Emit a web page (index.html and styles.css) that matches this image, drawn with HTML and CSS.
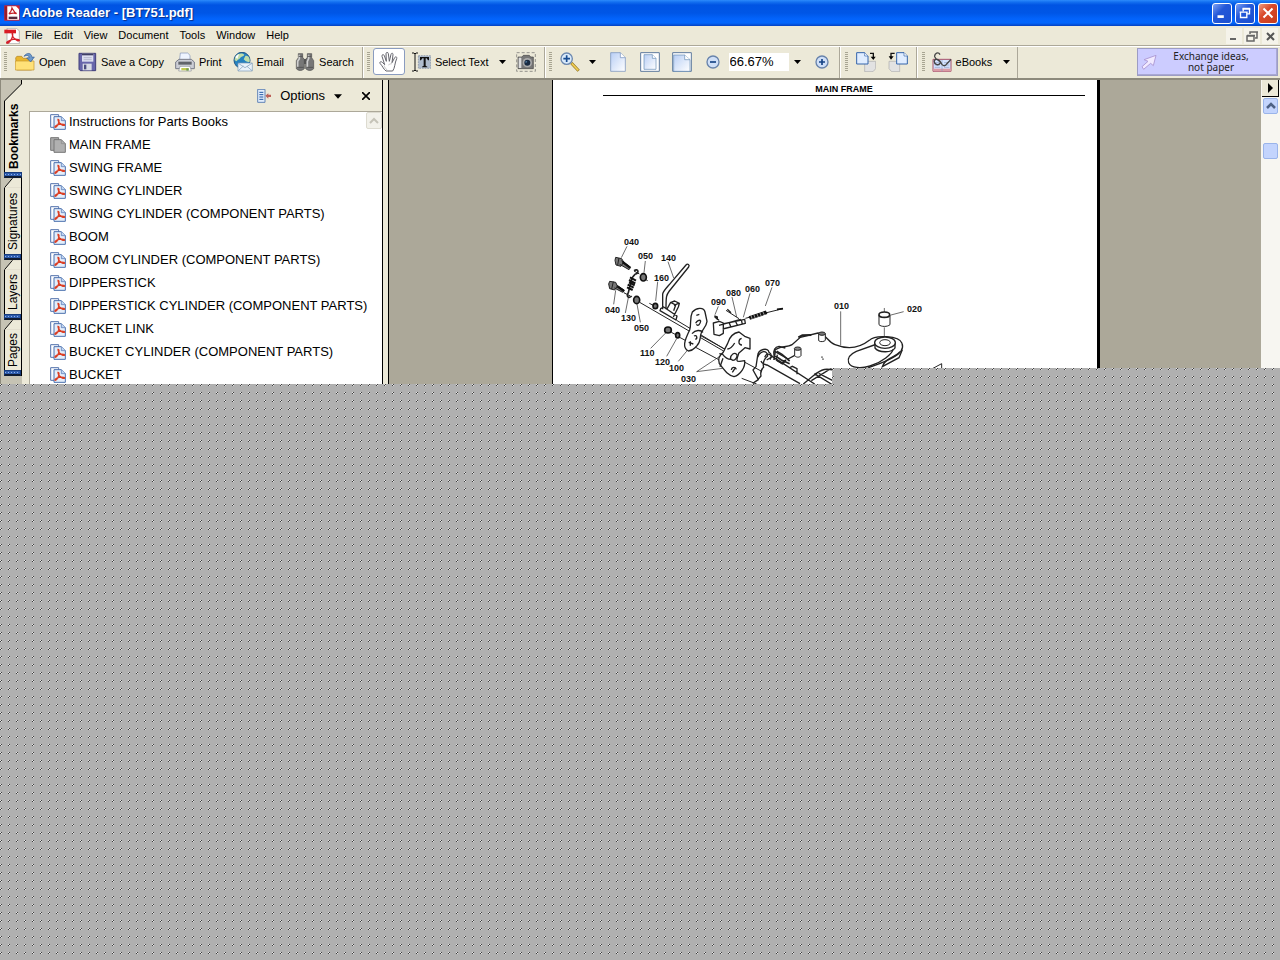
FILE: index.html
```html
<!DOCTYPE html>
<html lang="en">
<head>
<meta charset="utf-8">
<title>Adobe Reader - [BT751.pdf]</title>
<link rel="stylesheet" href="styles.css">
</head>
<body>
<svg class="defs" aria-hidden="true">
  <defs>
    <linearGradient id="paper" x1="0" y1="0" x2="1" y2="1"><stop offset="0" stop-color="#b9cff5"/><stop offset="1" stop-color="#fff"/></linearGradient>
    <pattern id="dots" width="8" height="8" patternUnits="userSpaceOnUse">
      <rect width="8" height="8" fill="#b0b0b0"/>
      <path d="M1 0h1v1h-1zM0 1h1v1h-1z" fill="#404040"/>
      <path d="M0 0h1v1h-1zM1 1h1v1h-1z" fill="#e4e4e4"/>
    </pattern>
    <symbol id="pdf" viewBox="0 0 48 48">
      <path d="M2 2h24v8M2 2v38h10" fill="#f3f7ff" stroke="#5573ad" stroke-width="3"/>
      <path d="M12 8h22l12 12v26H12z" fill="#e4eefb" stroke="#4b70ae" stroke-width="3"/>
      <path d="M34 8v12h12" fill="#c1d5f2" stroke="#4b70ae" stroke-width="2"/>
      <path d="M24 16c6 0 2 14-3 20-4 5-8 5-5 1 5-5 17-8 25-6 6 2 1 5-5 2-7-4-12-11-12-17z" fill="none" stroke="#db3f25" stroke-width="4"/>
    </symbol>
    <symbol id="pages" viewBox="0 0 48 48">
      <path d="M2 2h24v38H2z" fill="#a9a9a9" stroke="#777" stroke-width="3"/>
      <path d="M12 8h22l12 12v26H12z" fill="#b0b0b0" stroke="#777" stroke-width="3"/>
      <path d="M34 8v12h12" fill="none" stroke="#888" stroke-width="2"/>
    </symbol>
    <symbol id="down" viewBox="0 0 7 4"><path d="M0 0h7L3.5 4z"/></symbol>
  </defs>
</svg>

<div class="app">
  <header class="title">
    <svg class="ic16" viewBox="0 0 48 48"><path d="M1 1h46v46H1z" fill="#d7212a"/><path d="M10 4h26l9 9v31H10z" fill="#fff"/><path d="M2 4h7v40H2z" fill="#991c28"/><path d="M15 27c5-5 8-12 9-18 4 7 7 14 14 17-8-3-15-2-23 1z" fill="none" stroke="#c52027" stroke-width="4"/><path d="M14 35h26v7H14z" fill="#53283c"/></svg>
    <h1>Adobe Reader - [BT751.pdf]</h1>
    <div class="winbtns">
      <button aria-label="Minimize"><svg viewBox="0 0 20 20"><path d="M5 14h7" stroke="#fff" stroke-width="3"/></svg></button>
      <button aria-label="Restore"><svg viewBox="0 0 20 20"><path d="M8 8V5h7v6h-3M7 5.500h9M5 9h7v6H5zM4 9h9" fill="none" stroke="#fff" stroke-width="1.500"/></svg></button>
      <button class="close" aria-label="Close"><svg viewBox="0 0 20 20"><path d="M5 5l10 10M15 5L5 15" stroke="#fff" stroke-width="2.200"/></svg></button>
    </div>
  </header>

  <nav class="menu">
    <svg class="ic16" viewBox="0 0 48 48"><path d="M9 1h29l8 8v38H9z" fill="#fff" stroke="#999" stroke-width="2"/><path d="M1 5h35v11H1z" fill="#d91c24"/><path d="M25 15c4 8-4 24-11 29-6 4-9 0-2-4 9-5 23-8 32-5 5 2 0 5-5 2-8-4-16-13-14-22z" fill="none" stroke="#d4202a" stroke-width="4"/></svg>
    <button>File</button><button>Edit</button><button>View</button><button>Document</button><button>Tools</button><button>Window</button><button>Help</button>
    <div class="docbtns">
      <button aria-label="Minimize document"><svg viewBox="0 0 16 16"><path d="M4 11h6" stroke="#666" stroke-width="2"/></svg></button>
      <button aria-label="Restore document"><svg viewBox="0 0 16 16"><path d="M6 6V4h7v6h-2M6 4h8M3 8h7v5H3zM3 7.500h8" fill="none" stroke="#666" stroke-width="1.500"/></svg></button>
      <button aria-label="Close document"><svg viewBox="0 0 16 16"><path d="M5 5l7 7M12 5l-7 7" stroke="#555" stroke-width="2"/></svg></button>
    </div>
  </nav>

  <div class="toolbar">
    <div class="group files"><i class="grip"></i>
      <button><svg class="ic20" viewBox="0 0 60 60"><path d="M2 17l4-4h14l5 6h25v35H5z" fill="#e9b62d" stroke="#ad8122" stroke-width="2"/><path d="M1 54V27h56v27z" fill="#ffe178" stroke="#c59428" stroke-width="2"/><path d="M27 13C35 0 50 2 51 16l7-1-11 15-12-12 8-1c-2-7-7-9-16-4z" fill="#6d99cb" stroke="#315c97" stroke-width="2"/></svg>Open</button>
      <button><svg class="ic20" viewBox="0 0 60 60"><path d="M6 4h50v52H10l-4-4z" fill="#6866ab" stroke="#403e7a" stroke-width="3"/><path d="M15 4h34v25H15z" fill="#dddff0"/><path d="M15 4h34v6H15z" fill="#403f65"/><path d="M17 35h27v20H17z" fill="#d9dbe5"/><path d="M21 38h7v14h-7z" fill="#4c4e80"/><path d="M20 17h24M20 23h24" stroke="#a1a3bd" stroke-width="2"/></svg>Save a Copy</button>
      <button><svg class="ic20" viewBox="0 0 60 60"><path d="M16 3h22l7 7v20H13z" fill="#eef4ff" stroke="#7f91b5" stroke-width="2"/><path d="M2 30l10-8h37l9 8v20H2z" fill="#ccced6" stroke="#777b88" stroke-width="3"/><path d="M10 29h40v9H10z" fill="#60636b"/><path d="M15 43h30l4 14H11z" fill="#fff" stroke="#8b8e95" stroke-width="2"/><path d="M19 48h22v7H19z" fill="#c3cc54"/><path d="M34 49h7v7h-7z" fill="#70995a"/></svg>Print</button>
      <button><svg class="ic20" viewBox="0 0 60 60"><circle cx="27" cy="25" r="24" fill="#2581bf" stroke="#225785" stroke-width="3"/><path d="M9 12C19 1 29 4 34 8c-2 6-11 5-13 11-3 4-6 3-10 9L5 25c0-6 2-9 4-13zM37 12c8-3 15 7 13 17-9 3-14-3-18-7z" fill="#bfdda9"/><path d="M7 16c3-5 7-8 11-9l-5 14z" fill="#fff"/><path d="M15 33h43v24H15z" fill="#e9f2fb" stroke="#7897b5" stroke-width="2"/><path d="M16 34l20 13 21-13M16 56l15-14M57 56L42 43" fill="none" stroke="#7897b5" stroke-width="2"/></svg>Email</button>
      <button><svg class="ic20" viewBox="0 0 60 60"><path d="M10 5h13v11l5 6v28c-7 7-18 7-24 0V26l6-9zM37 5h13v12l6 9v24c-6 7-17 7-24 0V22l5-6z" fill="#777" stroke="#4b4b4b" stroke-width="2"/><path d="M27 21h7v15h-7z" fill="#555"/><path d="M13 8v12L8 28v19M41 8v12l-4 8v19" fill="none" stroke="#d0d0d0" stroke-width="5"/><path d="M11 13h12M37 13h12M6 46h20M34 46h20" stroke="#555" stroke-width="3"/></svg>Search</button>
    </div>
    <div class="group basic"><i class="grip"></i>
      <button class="hand" aria-label="Hand tool"><svg class="ic20" viewBox="0 0 60 60"><path d="M21 57C13 51 10 41 3 34c-2-5 4-7 8-2l6 6-8-25c-1-6 5-7 7-2l6 17-1-23c0-5 7-5 7 0l3 23 5-21c1-5 7-4 6 1l-3 24 8-15c3-5 8-2 6 3-6 13-5 28-12 37z" fill="#fff" stroke="#64646c" stroke-width="3"/><path d="M24 54c-4-5-8-9-9-14M39 35c-4 0-9 2-11 4" stroke="#aaa" stroke-width="2" fill="none"/></svg></button>
      <button class="seltext"><svg class="ic20" viewBox="0 0 60 60"><path d="M3 3h6l3 3 3-3h6M3 57h6l3-3 3 3h6M12 5v50" fill="none" stroke="#111" stroke-width="3"/><path d="M22 11h37v38H22z" fill="#afbccd" stroke="#7c899d" stroke-width="2" stroke-dasharray="5 3"/><path d="M27 15h27v10h-3l-4-6h-3v22l5 3v2H33v-2l5-3V19h-4l-4 6h-3z" fill="#111"/></svg>Select Text</button>
      <button class="arrow" aria-label="Selection options"><svg><use href="#down"/></svg></button>
      <button aria-label="Snapshot tool"><svg class="ic20" viewBox="0 0 60 60"><path d="M2 2h56v56H2z" fill="none" stroke="#666" stroke-width="2" stroke-dasharray="9 6"/><path d="M6 15h12l4-5h18l4 5h8v35H6z" fill="#777" stroke="#444" stroke-width="2"/><path d="M8 17h8v31H8z" fill="#ddd"/><circle cx="34" cy="32" r="14" fill="#aaa"/><circle cx="34" cy="32" r="9" fill="#192b42"/><path d="M29 27l5 2-5 4z" fill="#69a1ce"/></svg></button>
    </div>
    <div class="group zoom"><i class="grip"></i>
      <button aria-label="Zoom in tool"><svg class="ic20" viewBox="0 0 60 60"><path d="M34 33l22 23" stroke="#8b701e" stroke-width="9"/><path d="M35 34l20 21" stroke="#f2cf54" stroke-width="5"/><circle cx="20" cy="20" r="17" fill="#d9eafa" stroke="#6b87ae" stroke-width="4"/><path d="M20 10v20M10 20h20" stroke="#164b91" stroke-width="5"/></svg></button>
      <button class="arrow" aria-label="Zoom tools"><svg><use href="#down"/></svg></button>
      <button aria-label="Actual size"><svg class="ic20" viewBox="0 0 60 60"><path d="M8 2h29l15 15v41H8z" fill="url(#paper)" stroke="#6b89b9" stroke-width="2"/><path d="M37 2v15h15" fill="#fff" stroke="#6b89b9" stroke-width="2"/></svg></button>
      <button aria-label="Fit page"><svg class="ic20" viewBox="0 0 60 60"><path d="M2 2h56v56H2z" fill="#fff" stroke="#5e7a9d" stroke-width="3"/><path d="M12 8h25l11 11v33H12z" fill="url(#paper)" stroke="#648bb4" stroke-width="2"/><path d="M37 8v11h11" fill="#fff" stroke="#648bb4" stroke-width="2"/></svg></button>
      <button aria-label="Fit width"><svg class="ic20" viewBox="0 0 60 60"><path d="M2 2h56v56H2z" fill="#fff" stroke="#5e7a9d" stroke-width="3"/><path d="M5 9h33l16 14v35H5z" fill="url(#paper)" stroke="#648bb4" stroke-width="2"/><path d="M38 9v14h16" fill="#fff" stroke="#648bb4" stroke-width="2"/></svg></button>
      <button class="minus" aria-label="Zoom out"><svg class="ic14" viewBox="0 0 42 42"><circle cx="21" cy="21" r="18" fill="#cfdff7" stroke="#6883ab" stroke-width="4"/><path d="M12 21h18" stroke="#164486" stroke-width="5"/></svg></button>
      <div class="zoombox"><input type="text" value="66.67%" aria-label="Zoom level"><button class="arrow" aria-label="Zoom levels"><svg><use href="#down"/></svg></button></div>
      <button aria-label="Zoom in"><svg class="ic14" viewBox="0 0 42 42"><circle cx="21" cy="21" r="18" fill="#cfdff7" stroke="#6883ab" stroke-width="4"/><path d="M12 21h18M21 12v18" stroke="#164486" stroke-width="5"/></svg></button>
    </div>
    <div class="group rotate"><i class="grip"></i>
      <button aria-label="Rotate clockwise"><svg class="ic20" viewBox="0 0 60 60"><path d="M26 28h33v22l-8 9H26z" fill="#e2e2e2" stroke="#aaa" stroke-width="2"/><path d="M2 2h24l10 10v24H2z" fill="#e0edff" stroke="#3464aa" stroke-width="3"/><path d="M26 2v10h10" fill="#fff" stroke="#3464aa" stroke-width="2"/><path d="M42 4h10v12" fill="none" stroke="#111" stroke-width="4"/><path d="M44 14h15l-7 10z"/></svg></button>
      <button aria-label="Rotate counterclockwise"><svg class="ic20" viewBox="0 0 60 60"><path d="M3 28h32v31H11l-8-9z" fill="#e2e2e2" stroke="#aaa" stroke-width="2"/><path d="M26 2h22l10 10v24H26z" fill="#e0edff" stroke="#3464aa" stroke-width="3"/><path d="M48 2v10h10" fill="#fff" stroke="#3464aa" stroke-width="2"/><path d="M20 4H9v12" fill="none" stroke="#111" stroke-width="4"/><path d="M2 13h15l-8 10z"/></svg></button>
    </div>
    <div class="group books"><i class="grip"></i>
      <button><svg class="ic20" viewBox="0 0 60 60"><path d="M3 22h54v36H3z" fill="#d5e4ff" stroke="#a65069" stroke-width="3"/><path d="M4 58h53v-8H4z" fill="#dc9ca5"/><path d="M30 24v34M8 32h17M8 39h17M8 46h17M36 32h16M36 39h16M36 46h16" stroke="#8c9dc3" stroke-width="2"/><path d="M24 8C19-2 7 4 8 14c3 12 22 12 16 20-5 9-19 2-17-8 5-9 17-2 20 6 3 11 13 12 17 4l13-14" fill="none" stroke="#454545" stroke-width="4"/></svg>eBooks</button>
      <button class="arrow" aria-label="eBooks menu"><svg><use href="#down"/></svg></button>
    </div>
    <a class="banner" href="#"><svg class="ic16" viewBox="0 0 48 48"><path d="M45 4L37 35 29 28 8 46 3 38 21 22 9 17z" fill="#f1eaff" stroke="#b09dd7" stroke-width="3"/></svg><span>Exchange ideas,<br>not paper</span></a>
  </div>

  <main class="work">
    <div class="tabs">
      <button class="tab on"><svg viewBox="0 0 18 21"><path d="M18 0v4L1 21h17z" fill="#ece9d8"/><path d="M17.500 0v4L.5 21" fill="none" stroke="#000"/></svg><span>Bookmarks</span><i></i></button>
      <button class="tab sig"><svg viewBox="0 0 18 10"><path d="M9 0L0 10h18V0z" fill="#ece9d8"/><path d="M9 0L.5 10" stroke="#000"/></svg><span>Signatures</span><i></i></button>
      <button class="tab lay"><svg viewBox="0 0 18 10"><path d="M9 0L0 10h18V0z" fill="#ece9d8"/><path d="M9 0L.5 10" stroke="#000"/></svg><span>Layers</span><i></i></button>
      <button class="tab pag"><svg viewBox="0 0 18 10"><path d="M9 0L0 10h18V0z" fill="#ece9d8"/><path d="M9 0L.5 10" stroke="#000"/></svg><span>Pages</span><i></i></button>
    </div>
    <aside class="panel">
      <div class="panelhead">
        <button><svg class="ic14" viewBox="0 0 42 42"><path d="M2 1h22v39H2z" fill="#e1edfc" stroke="#6385b6" stroke-width="3"/><path d="M7 10h12M7 17h12M7 24h12M7 31h12" stroke="#2459a4" stroke-width="3"/><path d="M25 20l9-7v4h8v7h-8v5z" fill="#bd6058"/></svg>Options<svg class="tri"><use href="#down"/></svg></button>
        <button aria-label="Close panel"><svg class="x" viewBox="0 0 8 8"><path d="M0 0l8 8M8 0L0 8" stroke="#000" stroke-width="1.600"/></svg></button>
      </div>
      <div class="listwrap">
        <ul>
          <li><a href="#"><svg><use href="#pdf"/></svg>Instructions for Parts Books</a></li>
          <li><a href="#"><svg><use href="#pages"/></svg>MAIN FRAME</a></li>
          <li><a href="#"><svg><use href="#pdf"/></svg>SWING FRAME</a></li>
          <li><a href="#"><svg><use href="#pdf"/></svg>SWING CYLINDER</a></li>
          <li><a href="#"><svg><use href="#pdf"/></svg>SWING CYLINDER (COMPONENT PARTS)</a></li>
          <li><a href="#"><svg><use href="#pdf"/></svg>BOOM</a></li>
          <li><a href="#"><svg><use href="#pdf"/></svg>BOOM CYLINDER (COMPONENT PARTS)</a></li>
          <li><a href="#"><svg><use href="#pdf"/></svg>DIPPERSTICK</a></li>
          <li><a href="#"><svg><use href="#pdf"/></svg>DIPPERSTICK CYLINDER (COMPONENT PARTS)</a></li>
          <li><a href="#"><svg><use href="#pdf"/></svg>BUCKET LINK</a></li>
          <li><a href="#"><svg><use href="#pdf"/></svg>BUCKET CYLINDER (COMPONENT PARTS)</a></li>
          <li><a href="#"><svg><use href="#pdf"/></svg>BUCKET</a></li>
        </ul>
        <div class="vbar off"><button aria-label="Scroll up"><svg viewBox="0 0 14 14"><path d="M3 9l4-4 4 4" fill="none" stroke="#c5c3b8" stroke-width="2"/></svg></button></div>
      </div>
    </aside>
    <div class="split"></div>
    <section class="doc">
      <article class="sheet">
        <h2>MAIN FRAME</h2>
        <svg class="drawing" viewBox="553 96 544 288" role="img" aria-label="Main frame exploded view">
          <g transform="translate(590 225) scale(.33333)" fill="none" stroke="#222" stroke-width="3" stroke-linejoin="round">
            <path d="M111 64L94 98M166 108l-4 35M234 110l17 49M203 170l-6 58M77 196l-6 42M106 264l9-46M151 292l-10-55M526 243l20-56M480 205l-20 72M426 216l14 60M385 244l-10 25M182 370l45-46M230 394l30-53M265 409l32-39M320 440l83-55M320 440l78-10" stroke-width="2"/>
            <path d="M91 111l28 18M132 138l16 9M163 161l10 6M75 186l28 15M101 203l20 10M149 232l250 145M178 235l20 10M244 322l25 13M267 336l28 15M300 358l90 48M260 286l150 90M332 332l77 43M455 460l45 17M465 412l50 27M408 256l39 25M466 280l23-6M526 264l53-13" stroke-width="3"/>
            <path d="M77 97l18 4 6 10-8 13-15-4-3-14zM87 99l-4 21M94 107l28 20-5 7-28-16M59 169l18 3 5 11-8 12-15-4-3-14zM70 170l-5 22M81 181l22 15-5 6-25-13" fill="#777" stroke-width="3"/>
            <path d="M98 111l22 17M82 184l20 14" stroke="#111" stroke-width="7"/>
            <path d="M132 137c14-9 16 10 4 10-9 9-11 12-12 19l-9 37c-7 11 1 19 10 10" stroke-width="5"/>
            <path d="M120 157l18 10M117 165l19 10M117 172l17 9M113 179l18 9M111 187l17 8" stroke="#111" stroke-width="6"/>
            <g fill="#777" stroke="#111" stroke-width="5"><ellipse cx="160" cy="157" rx="9" ry="11"/><ellipse cx="140" cy="225" rx="9" ry="11"/><ellipse cx="196" cy="243" rx="7" ry="8"/><ellipse cx="234" cy="315" rx="10" ry="9"/><ellipse cx="263" cy="331" rx="6" ry="8"/></g>
            <path d="M218 253V208c0-9 15-23 25-35l45-53c5-6 12 0 8 6l-58 72c-9 12-10 15-10 55M212 251l9-5 40 27-3 12-48-28zM231 252l11-20 15 8-6 17M243 232l11-4 14 7-3 11-15 30M252 241l13-6" stroke-width="4"/>
            <path d="M299 315c6-21-1-35 8-54 12-13 34-16 38 0l6 28c-2 18-15 24-18 37-4 14 0 25-13 37-8 7-10 14-25 15-18-9-13-29 4-63z" fill="#fff" stroke-width="4"/>
            <path d="M306 326c11-12 26-12 33-4M317 295c3-7 12-12 15-7-1 9-8 17-13 10M319 271l9-3M312 333c8-5 12 7 4 10M296 352l14 5M301 349v13" stroke-width="4"/>
            <path d="M370 294l18-5 12 5v31l-12 7-16-4zM387 301l65-18M398 312l68-17-2-12-66 14M417 292l6 15M436 287l6 14M454 284l3 14M373 273l9 3v9M374 276l13 10M412 253l11 10" fill="none" stroke-width="4"/>
            <path d="M477 277l52-17M479 281l52-17" stroke="#111" stroke-width="7"/><path d="M482 269l5 14M491 268l5 12M500 265l5 11M509 262l5 12M518 259l5 11" stroke="#ddd" stroke-width="2"/>
            <path d="M561 253l18-2" stroke="#111" stroke-width="5"/>
            <path d="M399 383l14-28c5-18 17-31 34-34l17 13 16 6v32l-15-4-19 17c-4 16-11 25 3 24l15-2c3 19-13 42-32 48-20-6-27-17-44-39-4-12-2-24 11-33z" fill="#fff" stroke-width="4"/>
            <path d="M388 386l10 2c8 11 16 17 29 15M412 372c7 0 15-6 22-18M455 340c-10 2-12 20 1 20M421 402c1-15 12-21 20-13 1 7-4 17-12 17zM424 435c2-11 13-9 15-2M435 430l-8 12M390 425l9-25" stroke-width="4"/>
            <path d="M488 475l17-11-16-29 9-10 5-33c1-19 32-27 34-10 8 4 9 12 3 22M503 397c9-22 29-22 30-4-8 7-16 20-12 34-9 7-10 16-8 26l-12 14" stroke-width="4"/>
            <path d="M552 392c-3-18 3-26 15-28l19 5M554 379l40 23 19-10 16-15M562 389l-3 16 18 12 10-10M530 405l20-12" stroke-width="4"/>
          </g>
          <g transform="translate(740 280) scale(.33333)" fill="none" stroke="#222" stroke-width="3">
            <path d="M302 94v102M491 95l-38 10M433 84v15M433 142v43" stroke-width="2"/>
            <path d="M103 213c11-17 37-9 53-19l25-22 53-13c25 3 29 27 51 35 48 19 84 2 103-13 16-17 90-15 98 9 7 18-5 31-28 43-22 13-45 20-74 31" stroke-width="4"/>
            <path d="M411 192l-62 22c-20 9-27 22-23 34 8 17 37 18 64 10 34-10 69-38 69-50M480 215c-11 17-45 17-53 45l50-27 10-24" stroke-width="4"/>
            <path d="M405 187v17c10 14 50 16 60 0v-17" stroke-width="4"/><ellipse cx="435" cy="188" rx="31" ry="17" fill="#fff" stroke-width="4"/><ellipse cx="435" cy="188" rx="16" ry="9"/>
            <path d="M417 105v29c6 7 26 7 33 0v-29"/><ellipse cx="433" cy="104" rx="16" ry="8" fill="#fff" stroke-width="5"/>
            <path d="M236 161v21c5 5 17 3 20-1v-20M164 207v20c6 7 16 5 19 0v-20" fill="#fff"/><ellipse cx="246" cy="161" rx="10" ry="5" fill="#777"/><ellipse cx="173" cy="206" rx="10" ry="5" fill="#888"/>
            <path d="M175 172l12-6 27-1" stroke-width="6"/>
            <path d="M110 214l16 9 23 20M104 226l20 14 25 11M110 241l15 8 13-9M106 212l-4 28" stroke-width="5"/>
            <path d="M74 232c5-12 12-12 19-5l131 85M63 243c3 10 10 10 18 12l99 56M190 312l29-24c35-29 44-20 80-15M214 302l57-35 29 4M223 281l54 33M236 280l41 21M147 264l10-5 14 7v17" stroke-width="4"/>
            <path d="M246 229v5M249 235v5M579 265l26-14v18"/>
            <path d="M281 286l20-22h30v24z" fill="#b0b0b0" stroke="none"/>
          </g>
          <g class="labels"><text x="624" y="245">040</text><text x="638" y="259">050</text><text x="661" y="261">140</text><text x="654" y="281">160</text><text x="605" y="313">040</text><text x="621" y="321">130</text><text x="634" y="331">050</text><text x="640" y="356">110</text><text x="655" y="365">120</text><text x="669" y="371">100</text><text x="681" y="382">030</text><text x="711" y="305">090</text><text x="726" y="296">080</text><text x="745" y="292">060</text><text x="765" y="286">070</text><text x="834" y="309">010</text><text x="907" y="312">020</text></g>
        </svg>
      </article>
    </section>
    <div class="vbar main"><button class="play" aria-label="Navigation menu"><svg viewBox="0 0 14 14"><path d="M5 2v10l5-5z"/></svg></button><button class="blue" aria-label="Scroll up"><svg viewBox="0 0 14 14"><path d="M3 9l4-4 4 4" fill="none" stroke="#4d6185" stroke-width="2.500"/></svg></button><div class="thumb blue"></div></div>
  </main>
  <svg class="step"><rect width="100%" height="100%" fill="url(#dots)"/></svg>
</div>
<svg class="rest"><rect width="100%" height="100%" fill="url(#dots)"/></svg>
</body>
</html>
```
FILE: styles.css
```css
* { box-sizing: border-box; }
body { margin: 0; height: 100vh; display: flex; flex-direction: column; overflow: hidden; font: 11px/14px "Liberation Sans", Arial, sans-serif; color: #000; }
button { border: 0; padding: 0; background: none; font: inherit; color: inherit; display: flex; align-items: center; }
svg { display: block; flex: none; }
a { color: inherit; text-decoration: none; }
.defs { position: absolute; width: 0; height: 0; }
.app { position: relative; height: 40vh; display: flex; flex-direction: column; overflow: hidden; background: #ece9d8; }
.rest { flex: 1; width: 100%; min-height: 0; shape-rendering: crispEdges; }
.step { position: absolute; left: 65%; right: 0; bottom: 0; width: 35%; height: 16px; shape-rendering: crispEdges; }
.ic20 { width: 20px; height: 20px; }
.ic16 { width: 16px; height: 16px; }
.ic14 { width: 14px; height: 14px; }

.title { flex: none; height: 26px; display: flex; align-items: center; gap: 2px; padding: 0 2px 0 4px; background: linear-gradient(#2d8bfb 0, #1470f0 2px, #0054e3 5px, #0056e6 13px, #0364fc 19px, #0266fc 23px, #0440c0 26px); }
.title h1 { flex: 1; margin: 0; font-size: 13px; line-height: 16px; color: #fff; text-shadow: 1px 1px 1px #0a2d86; }
.winbtns { display: flex; gap: 3px; }
.winbtns button { width: 20px; height: 21px; border: 1px solid #fff; border-radius: 3px; background: linear-gradient(135deg, #7fa2f4, #2458d8 40%, #1b4fd0); }
.winbtns .close { background: linear-gradient(135deg, #f09b80, #d9492a 40%, #c63c1c); }

.menu { flex: none; height: 20px; display: flex; align-items: center; padding: 0 2px 0 4px; gap: 11px; border-bottom: 1px solid #aca899; }
.menu > .ic16 { margin-right: -6px; }
.menu > button { height: 18px; padding-bottom: 2px; }
.docbtns { margin-left: auto; display: flex; gap: 2px; }
.docbtns button { width: 16px; height: 16px; background: #f5f3ea; }

.toolbar { flex: none; height: 34px; display: flex; align-items: stretch; border-top: 1px solid #fff; border-bottom: 2px solid #8d8a7c; padding-right: 2px; }
.group { display: flex; align-items: center; padding: 0 7px 2px 4px; border-right: 1px solid #aca899; border-left: 1px solid #fff; gap: 11px; }
.group button { gap: 4px; white-space: nowrap; }
.grip { width: 3px; height: 20px; background: repeating-linear-gradient(#a8a592 0 1px, transparent 1px 2px); }
.files { padding-left: 3px; padding-right: 8px; gap: 11px; }
.files .grip { margin-right: -3px; }
.zoom .grip, .rotate .grip, .books .grip { margin-right: -4px; }
.arrow svg { width: 7px; height: 4px; }
.basic { padding-left: 3px; padding-right: 8px; gap: 10px; }
.basic .grip { margin-right: -7px; }
.group .hand { width: 32px; height: 27px; justify-content: center; margin-right: -4px; border: 1px solid #8a9cc0; border-radius: 3px; background: #fff; }
.zoom { gap: 12px; padding-left: 3px; padding-right: 10px; }
.zoom .arrow { margin-left: -3px; }
.zoom .minus { margin-left: 2px; }
.zoombox { display: flex; align-items: center; gap: 8px; margin-right: 2px; margin-left: -3px; }
.zoombox input { width: 60px; height: 18px; border: 0; padding: 0 1px; background: #fff; font: 13px/18px "Liberation Sans", Arial, sans-serif; }
.rotate { padding-right: 8px; gap: 12px; }
.banner { margin: 1px 0 1px auto; width: 141px; height: 28px; padding: 0 21px 0 3px; display: flex; align-items: center; background: #ccccff; border: 1px solid #9c9cc4; box-shadow: inset -1px -1px #a9a9d4; font: 10px/11px "Noto Sans", sans-serif; text-align: center; color: #222; }
.banner span { flex: 1; white-space: nowrap; padding-left: 9px; }

.work { flex: 1; min-height: 0; display: flex; overflow: hidden; }
.tabs { flex: none; width: 22px; padding-left: 3px; background: #c6c3b4; border-left: 1px solid #8d8a7c; }
.tab { width: 100%; height: 60px; flex-direction: column; border-right: 1px solid #000; }
.tab svg { width: 100%; height: 10px; }
.tab span { flex: 1; width: 100%; display: flex; align-items: center; justify-content: center; writing-mode: vertical-rl; transform: rotate(180deg); background: #ece9d8; border-right: 1px solid #000; font-size: 12px; line-height: 16px; min-height: 0; white-space: nowrap; }
.tab i { width: 100%; height: 6px; background: repeating-linear-gradient(90deg, #8fb2ee 0 1px, #2e5cad 1px 3px) 0 1px / 100% 1px no-repeat #2e5cad; border: 1px solid #163b7d; border-bottom: 2px solid #101c33; }
.tab.on { height: 98px; border-right: 0; font-weight: bold; }
.tab.on svg { height: 21px; }
.tab.sig { height: 82px; }
.tab.pag { height: 56px; }
.panel { flex: 0 1 361px; min-width: 0; display: flex; flex-direction: column; padding-left: 7px; border-right: 1px solid #000; }
.panelhead { flex: none; height: 32px; display: flex; align-items: center; justify-content: flex-end; gap: 20px; padding: 1px 12px 0 0; border-bottom: 1px solid #aca899; font-size: 13px; }
.panelhead button { gap: 9px; }
.tri { width: 8px; height: 5px; }
.x { width: 8px; height: 8px; }
.listwrap { flex: 1; min-height: 0; display: flex; background: #fff; border-left: 1px solid #aca899; }
.listwrap ul { flex: 1; min-width: 0; margin: 0; padding: 0 0 0 20px; list-style: none; font-size: 13px; line-height: 20px; }
.listwrap li a { display: flex; align-items: center; height: 23px; gap: 3px; white-space: nowrap; padding-bottom: 3px; }
.listwrap li svg { width: 16px; height: 16px; }
.vbar { flex: none; width: 18px; background: #f7f6f1; display: flex; flex-direction: column; align-items: center; }
.vbar.off { width: 16px; background: none; }
.vbar svg { width: 14px; height: 14px; }
.vbar button { width: 16px; height: 17px; justify-content: center; border-radius: 2px; }
.off button { border: 1px solid #dddbd0; background: #f2f1ea; }
.split { flex: none; width: 6px; border-right: 1px solid #000; }
.doc { flex: 1; min-width: 0; overflow: hidden; background: #aca899; display: flex; justify-content: center; align-items: flex-start; padding-left: 2px; }
.sheet { flex: none; background: #fff; border-left: 1px solid #000; border-right: 3px solid #000; }
.sheet h2 { margin: 0 12px 0 50px; padding: 4px 0 0; border-bottom: 1px solid #000; font-size: 9px; line-height: 11px; text-align: center; }
.drawing { width: 544px; height: 288px; }
.labels { font: bold 9px "Liberation Sans", Arial, sans-serif; fill: #111; }
.main { width: 19px; }
.vbar .play { background: #ece9d8; border-right: 1px solid #000; border-bottom: 1px solid #000; border-radius: 0; width: 17px; }
.vbar .blue { width: 15px; height: 16px; border: 1px solid #9ab4ea; border-radius: 2px; background: #c3d4fd; }
.main button.blue { margin-top: 1px; }
.main .thumb { margin-top: 29px; }
```
